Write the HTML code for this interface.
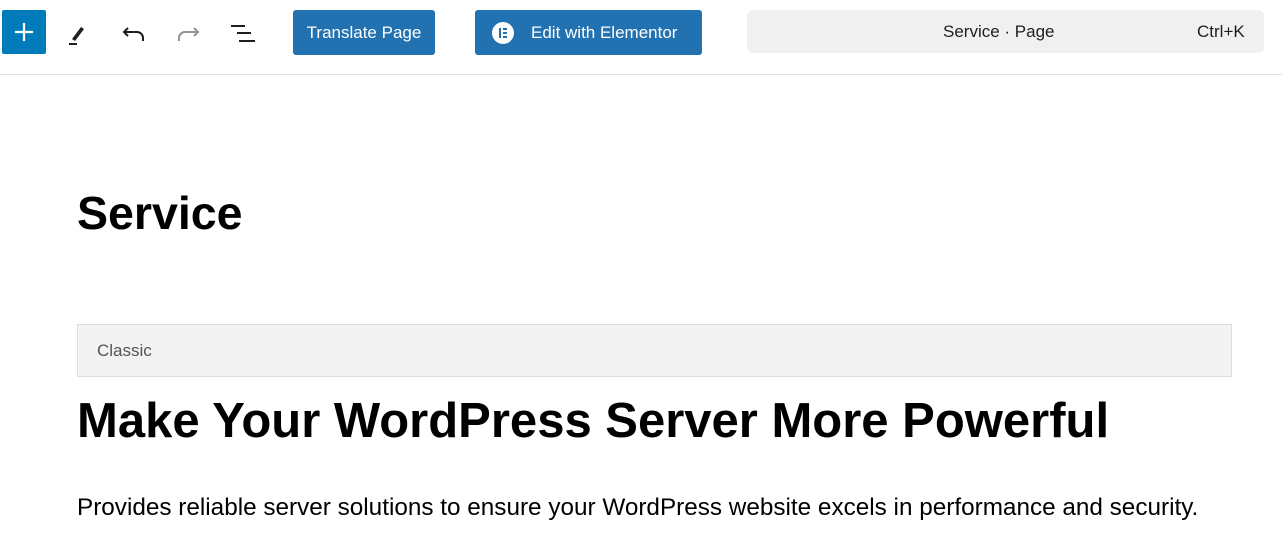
<!DOCTYPE html>
<html><head><style>
*{margin:0;padding:0;box-sizing:border-box}
body{width:1282px;height:550px;overflow:hidden;background:#fff;font-family:"Liberation Sans",sans-serif;color:#000;position:relative}
.hdr{position:absolute;left:0;top:0;width:1282px;height:75px;border-bottom:1px solid #e0e0e0}
.abs{position:absolute}
.plus{left:2px;top:10px;width:44px;height:44px;background:#007cba;border-radius:2px}
.btn{background:#2271b1;color:#fff;border-radius:3px;font-size:17px;display:flex;align-items:center;justify-content:center}
.search{left:747px;top:10px;width:517px;height:43px;background:#f0f0f0;border-radius:6px;font-size:17px;color:#1e1e1e}
</style></head><body>
<div class="hdr">
 <div class="abs plus"><svg width="44" height="44"><path d="M22 13v18M13 22h18" stroke="#fff" stroke-width="2.2"/></svg></div>
 <svg class="abs" style="left:64px;top:20px" width="28" height="28"><path d="M8 19l9-12 3 2-9 12z" fill="#1e1e1e"/><path d="M5 24h8" stroke="#1e1e1e" stroke-width="2"/></svg>
 <svg class="abs" style="left:120px;top:20px" width="28" height="28"><path d="M8 8l-4 4 4 4M4 12h13a6 6 0 0 1 6 6v3" fill="none" stroke="#1e1e1e" stroke-width="2"/></svg>
 <svg class="abs" style="left:174px;top:20px" width="28" height="28"><path d="M20 8l4 4-4 4M24 12H11a6 6 0 0 0-6 6v3" fill="none" stroke="#949494" stroke-width="2"/></svg>
 <svg class="abs" style="left:228px;top:20px" width="30" height="28"><path d="M3 6h14M9 13h14M11 21h16" stroke="#1e1e1e" stroke-width="2"/></svg>
 <div class="abs btn" style="left:293px;top:10px;width:142px;height:45px">Translate Page</div>
 <div class="abs btn" style="left:475px;top:10px;width:227px;height:45px;justify-content:flex-start;padding-left:17px">
  <svg width="22" height="22" style="margin-right:17px"><circle cx="11" cy="11" r="11" fill="#fff"/><path d="M7 6h2v10H7zM11 6h4v2h-4zM11 10h4v2h-4zM11 14h4v2h-4z" fill="#2271b1"/></svg>Edit with Elementor</div>
 <div class="abs search"><span class="abs" style="left:196px;top:12px">Service · Page</span><span class="abs" style="left:450px;top:12px">Ctrl+K</span></div>
</div>
<div class="abs" style="left:77px;top:186px;font-size:46.5px;font-weight:bold">Service</div>
<div class="abs" style="left:77px;top:324px;width:1155px;height:53px;background:#f3f3f3;border:1px solid #ddd;font-size:17px;color:#555;padding:16px 19px">Classic</div>
<div class="abs" style="left:77px;top:393px;font-size:49px;font-weight:bold;white-space:nowrap">Make Your WordPress Server More Powerful</div>
<div class="abs" style="left:77px;top:494px;font-size:24.3px;white-space:nowrap">Provides reliable server solutions to ensure your WordPress website excels in performance and security.</div>
</body></html>
